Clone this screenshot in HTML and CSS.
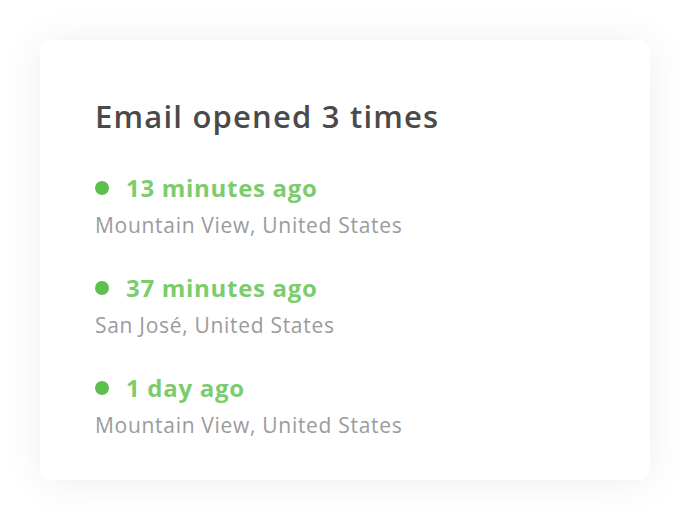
FILE: index.html
```html
<!DOCTYPE html>
<html lang="en">
<head>
  <meta charset="UTF-8">
  <meta name="viewport" content="width=device-width, initial-scale=1.0">
  <title>Email opens</title>
  <link rel="stylesheet" href="styles.css">
</head>
<body>
  <div class="card">
    <h1>Email opened 3 times</h1>
    <ul class="opens">
      <li class="open">
        <p class="when"><span class="dot"></span>13 minutes ago</p>
        <p class="where">Mountain View, United States</p>
      </li>
      <li class="open">
        <p class="when"><span class="dot"></span>37 minutes ago</p>
        <p class="where">San José, United States</p>
      </li>
      <li class="open">
        <p class="when"><span class="dot"></span>1 day ago</p>
        <p class="where">Mountain View, United States</p>
      </li>
    </ul>
  </div>
</body>
</html>
```

FILE: styles.css
```css
body {
  margin: 0;
  padding: 40px;
  background: #fff;
  font-family: "Open Sans", sans-serif;
}

.card {
  width: 610px;
  height: 440px;
  box-sizing: border-box;
  padding: 56px 55px;
  background: #fff;
  border-radius: 10px;
  box-shadow: 0 2px 40px rgba(0, 0, 0, 0.07);
}

h1 {
  margin: 0 0 37px;
  font-size: 31px;
  line-height: 40px;
  font-weight: 600;
  letter-spacing: 1.2px;
  color: #4a4a4a;
}

.opens {
  list-style: none;
  margin: 0;
  padding: 0;
}

.open {
  height: 100px;
}

.when {
  display: flex;
  align-items: center;
  margin: 0;
  font-size: 24px;
  line-height: 30px;
  font-weight: 700;
  letter-spacing: 0.7px;
  color: #7ccc6e;
}

.dot {
  width: 14px;
  height: 14px;
  margin-right: 17px;
  border-radius: 50%;
  background: #5cbf4e;
}

.where {
  margin: 9px 0 0;
  font-size: 21px;
  line-height: 26px;
  letter-spacing: 0.7px;
  color: #9b9b9b;
}
```
